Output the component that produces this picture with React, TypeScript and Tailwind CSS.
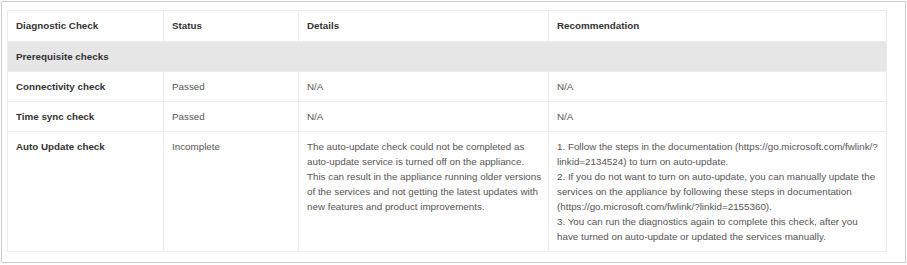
import React from "react";

const bold = "text-[#333333] font-bold";
const cell = "border-r border-[#ececec] px-2 py-[7px] align-top";

export default function App() {
  return (
    <div className="w-[907px] h-[265px] bg-white" style={{ fontFamily: '"Liberation Sans", Arial, sans-serif' }}>
      <div className="ml-px mt-px w-[905px] h-[262px] border border-[#cccccc] pl-[5px] pt-[8px]">
        <table className="table-fixed border-collapse w-[879px] text-[9.8px] leading-[15px] text-[#555555]">
          <colgroup>
            <col className="w-[156px]" />
            <col className="w-[135px]" />
            <col className="w-[250px]" />
            <col className="w-[338px]" />
          </colgroup>
          <tbody>
            <tr className="border border-[#ececec] h-[31px]">
              <td className={`${cell} ${bold} align-middle`}>Diagnostic Check</td>
              <td className={`${cell} ${bold} align-middle`}>Status</td>
              <td className={`${cell} ${bold} align-middle`}>Details</td>
              <td className={`${cell} ${bold} align-middle`}>Recommendation</td>
            </tr>
            <tr className="border border-[#ececec] bg-[#e6e6e6] h-[30px]">
              <td colSpan={4} className={`px-2 align-middle ${bold}`}>Prerequisite checks</td>
            </tr>
            <tr className="border border-[#ececec] h-[30px]">
              <td className={`${cell} ${bold} align-middle`}>Connectivity check</td>
              <td className={`${cell} align-middle`}>Passed</td>
              <td className={`${cell} align-middle`}>N/A</td>
              <td className={`${cell} align-middle`}>N/A</td>
            </tr>
            <tr className="border border-[#ececec] h-[30px]">
              <td className={`${cell} ${bold} align-middle`}>Time sync check</td>
              <td className={`${cell} align-middle`}>Passed</td>
              <td className={`${cell} align-middle`}>N/A</td>
              <td className={`${cell} align-middle`}>N/A</td>
            </tr>
            <tr className="border border-[#ececec] h-[119px]">
              <td className={`${cell} ${bold}`}>Auto Update check</td>
              <td className={cell}>Incomplete</td>
              <td className={`${cell} whitespace-nowrap`}>
                The auto-update check could not be completed as
                <br />
                auto-update service is turned off on the appliance.
                <br />
                This can result in the appliance running older versions
                <br />
                of the services and not getting the latest updates with
                <br />
                new features and product improvements.
              </td>
              <td className={`${cell} whitespace-nowrap`}>
                1. Follow the steps in the documentation (https://go.microsoft.com/fwlink/?
                <br />
                linkid=2134524) to turn on auto-update.
                <br />
                2. If you do not want to turn on auto-update, you can manually update the
                <br />
                services on the appliance by following these steps in documentation
                <br />
                (https://go.microsoft.com/fwlink/?linkid=2155360).
                <br />
                3. You can run the diagnostics again to complete this check, after you
                <br />
                have turned on auto-update or updated the services manually.
              </td>
            </tr>
          </tbody>
        </table>
      </div>
    </div>
  );
}
